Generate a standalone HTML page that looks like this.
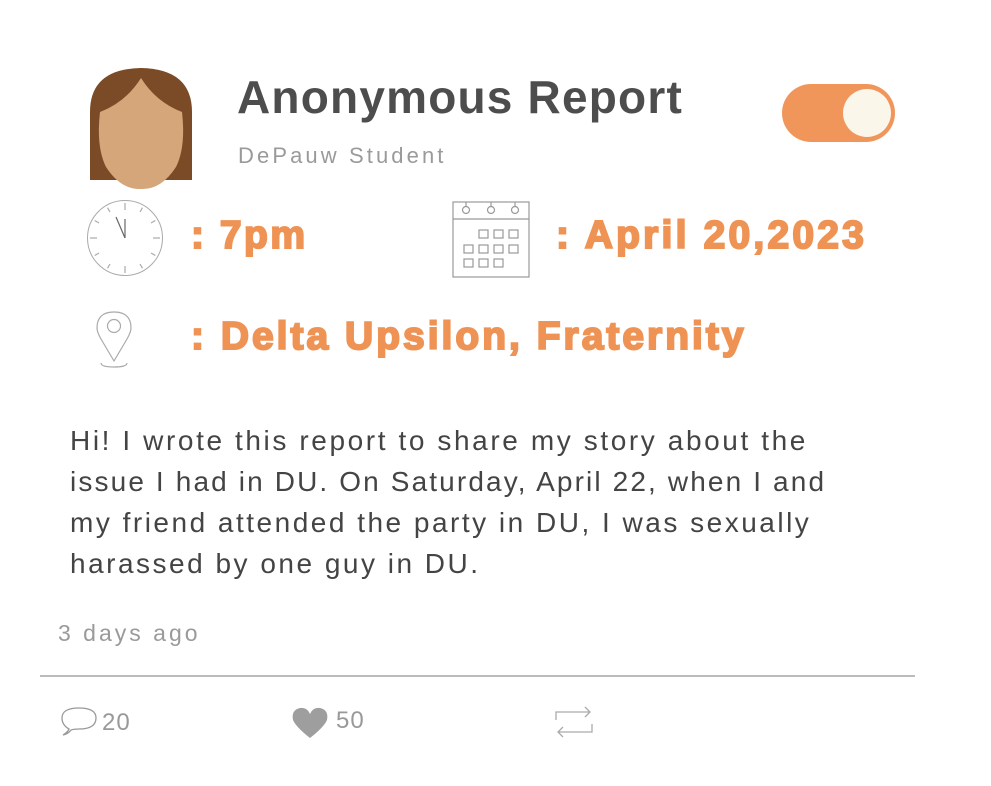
<!DOCTYPE html>
<html><head><style>
body{margin:0;width:991px;height:786px;background:#fff;position:relative;overflow:hidden;font-family:"Liberation Sans",sans-serif}
.a{position:absolute;white-space:nowrap}
.or{color:#ef9355;font-weight:900;-webkit-text-stroke:2px #ef9355}
</style></head><body>
<svg class="a" style="left:86px;top:67px" width="110" height="124" viewBox="0 0 110 124">
<path d="M4 113 L4 45 Q4 2 55 1 Q106 2 106 45 L106 113 Z" fill="#7a4b26"/>
<path d="M55 11 Q40 35 14 45 Q10 80 20 100 Q35 123 55 122 Q75 123 90 100 Q100 80 96 45 Q70 35 55 11Z" fill="#d4a67a"/>
</svg>
<div class="a" style="left:237px;top:70px;font-size:46px;font-weight:bold;color:#4d4d4d;letter-spacing:1.2px">Anonymous Report</div>
<div class="a" style="left:238px;top:143px;font-size:22px;color:#9a9a9a;letter-spacing:3.1px">DePauw Student</div>
<div class="a" style="left:782px;top:84px;width:113px;height:58px;border-radius:29px;background:#f0965a"></div>
<div class="a" style="left:843px;top:89px;width:48px;height:48px;border-radius:50%;background:#faf6ea"></div>
<svg class="a" style="left:84px;top:197px" width="82" height="82" viewBox="0 0 82 82" stroke="#aaa" fill="none">
<circle cx="41" cy="41" r="37.5" stroke-width="1"/>
<g stroke-width="1.2">
<line x1="41" y1="6" x2="41" y2="13"/><line x1="41" y1="69" x2="41" y2="76"/><line x1="6" y1="41" x2="13" y2="41"/><line x1="69" y1="41" x2="76" y2="41"/>
<line x1="58.5" y1="10.7" x2="56" y2="15"/><line x1="71.3" y1="23.5" x2="67" y2="26"/><line x1="71.3" y1="58.5" x2="67" y2="56"/><line x1="58.5" y1="71.3" x2="56" y2="67"/>
<line x1="23.5" y1="71.3" x2="26" y2="67"/><line x1="10.7" y1="58.5" x2="15" y2="56"/><line x1="10.7" y1="23.5" x2="15" y2="26"/><line x1="23.5" y1="10.7" x2="26" y2="15"/>
<line x1="41" y1="41" x2="41" y2="22" stroke="#666"/><line x1="41" y1="41" x2="32" y2="20" stroke="#666"/></g>
</svg>
<svg class="a" style="left:452px;top:199px" width="80" height="80" viewBox="0 0 80 80" stroke="#999" fill="none" stroke-width="1.2">
<rect x="1" y="3" width="76" height="75"/><line x1="1" y1="20" x2="77" y2="20"/>
<circle cx="14" cy="11" r="3.5"/><circle cx="39" cy="11" r="3.5"/><circle cx="63" cy="11" r="3.5"/>
<line x1="14" y1="3" x2="14" y2="7"/><line x1="39" y1="3" x2="39" y2="7"/><line x1="63" y1="3" x2="63" y2="7"/>
<rect x="27" y="31" width="9" height="8"/><rect x="42" y="31" width="9" height="8"/><rect x="57" y="31" width="9" height="8"/>
<rect x="12" y="46" width="9" height="8"/><rect x="27" y="46" width="9" height="8"/><rect x="42" y="46" width="9" height="8"/><rect x="57" y="46" width="9" height="8"/>
<rect x="12" y="60" width="9" height="8"/><rect x="27" y="60" width="9" height="8"/><rect x="42" y="60" width="9" height="8"/>
</svg>
<div class="a or" style="left:191px;top:214px;font-size:39px;letter-spacing:2.5px">: 7pm</div>
<div class="a or" style="left:556px;top:214px;font-size:39px;letter-spacing:3.2px">: April 20,2023</div>
<svg class="a" style="left:96px;top:311px" width="36" height="60" viewBox="0 0 36 60" stroke="#aaa" fill="none" stroke-width="1.2">
<path d="M18 50 L5 28 Q1 21 1 17 Q1 1 18 1 Q35 1 35 17 Q35 21 31 28 Z"/><circle cx="18" cy="15" r="6.5"/>
<path d="M5 52 Q5 56 18 56 Q31 56 31 52"/>
</svg>
<div class="a or" style="left:191px;top:315px;font-size:39px;letter-spacing:3px">: Delta Upsilon, Fraternity</div>
<div class="a" style="left:70px;top:420px;font-size:28px;line-height:41px;color:#444">
<div style="letter-spacing:2.6px">Hi! I wrote this report to share my story about the</div>
<div style="letter-spacing:2.13px">issue I had in DU. On Saturday, April 22, when I and</div>
<div style="letter-spacing:2.5px">my friend attended the party in DU, I was sexually</div>
<div style="letter-spacing:2.5px">harassed by one guy in DU.</div></div>
<div class="a" style="left:58px;top:620px;font-size:23px;color:#9a9a9a;letter-spacing:3px">3 days ago</div>
<div class="a" style="left:40px;top:675px;width:875px;height:2px;background:#bbb"></div>
<svg class="a" style="left:60px;top:705px" width="40" height="32" viewBox="0 0 40 32" stroke="#999" fill="none" stroke-width="1.3">
<path d="M3 30 Q8 27 9 24 Q2 20 2 13 Q2 3 19 3 Q36 3 36 13 Q36 24 19 24 Q14 24 11 25 Q8 29 3 30Z"/></svg>
<div class="a" style="left:102px;top:709px;font-size:24px;color:#999;letter-spacing:1px">20</div>
<svg class="a" style="left:291px;top:705px" width="38" height="34" viewBox="0 0 38 34"><path d="M19 33 Q5 22 2 15 Q0 5 9 3 Q16 2 19 9 Q22 2 29 3 Q38 5 36 15 Q33 22 19 33Z" fill="#9e9e9e"/></svg>
<div class="a" style="left:336px;top:707px;font-size:24px;color:#999;letter-spacing:1px">50</div>
<svg class="a" style="left:554px;top:704px" width="40" height="36" viewBox="0 0 40 36" stroke="#aaa" fill="none" stroke-width="1.3">
<path d="M2 16 V8 H36 M31 3 L36 8 L31 13"/><path d="M38 20 V28 H4 M9 23 L4 28 L9 33"/></svg>
</body></html>
